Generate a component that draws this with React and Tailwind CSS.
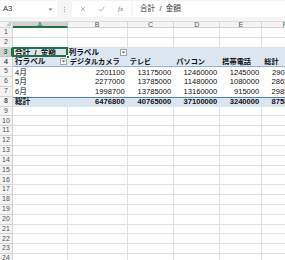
import { useState } from "react";

const colW = ["w-[54.7px]", "w-[60px]", "w-[46.6px]", "w-[46px]", "w-[42px]", "w-[46px]"];
const letters = ["A", "B", "C", "D", "E", "F"];

const body = [
  ["4月", "2201100", "13175000", "12460000", "1245000", "29081100"],
  ["5月", "2277000", "13785000", "11480000", "1080000", "28622000"],
  ["6月", "1998700", "13785000", "13160000", "915000", "29858700"],
];
const total = ["総計", "6476800", "40765000", "37100000", "3240000", "87581800"];
const heads = ["行ラベル", "デジタルカメラ", "テレビ", "パソコン", "携帯電話", "総計"];

function DropBtn() {
  return (
    <span className="flex h-[7px] w-[7px] items-center justify-center border border-[#a6a6a6] bg-white">
      <svg width="5" height="3" viewBox="0 0 5 3">
        <path d="M0.5 0.5h4L2.5 2.6z" fill="#666" />
      </svg>
    </span>
  );
}

function RowHead({ n, selected }) {
  return (
    <div
      className={`flex w-[13px] shrink-0 items-center justify-center border-b border-r text-[7px] ${
        selected
          ? "border-b-[#c6c6c6] border-r-[#217346] border-r-2 bg-[#d2d2d2] text-[#217346]"
          : "border-[#d4d4d4] bg-[#f3f3f3] text-[#555]"
      }`}
    >
      {n}
    </div>
  );
}

function PlainRow({ n }) {
  return (
    <div className="flex h-[9.83px]">
      <RowHead n={n} />
      {colW.map((w, i) => (
        <div key={i} className={`${w} shrink-0 border-b border-r border-[#e1e1e1]`} />
      ))}
    </div>
  );
}

export default function App() {
  const [sel] = useState("A3");
  const rows = [];
  for (let n = 9; n <= 24; n++) rows.push(<PlainRow key={n} n={n} />);

  return (
    <div
      className="h-[260px] w-[285px] overflow-hidden bg-white text-[7.6px] text-[#111]"
      style={{ fontFamily: '"Liberation Sans", "Noto Sans CJK JP", sans-serif' }}
    >
      {/* formula bar */}
      <div className="flex h-[17px] items-stretch bg-[#f5f5f5] pt-[1px]">
        <div className="flex w-[57px] items-center justify-between bg-white pl-[3px] pr-[4px] text-[#333]">
          <span>{sel}</span>
          <svg width="5" height="3" viewBox="0 0 5 3">
            <path d="M0.5 0.5h4L2.5 2.6z" fill="#777" />
          </svg>
        </div>
        <div className="flex w-[15px] items-center justify-center">
          <span className="flex flex-col gap-[1px]">
            <span className="h-[1px] w-[1px] bg-[#aaa]" />
            <span className="h-[1px] w-[1px] bg-[#aaa]" />
            <span className="h-[1px] w-[1px] bg-[#aaa]" />
          </span>
        </div>
        <div className="flex w-[59px] items-center bg-white pl-[8px] text-[#9a9a9a]">
          <svg width="6" height="6" viewBox="0 0 6 6" className="mr-[12px]">
            <path d="M1 1l4 4M5 1L1 5" stroke="#a5a5a5" strokeWidth="0.8" />
          </svg>
          <svg width="7" height="6" viewBox="0 0 7 6" className="mr-[13px]">
            <path d="M0.8 3.2l1.8 1.9L6.3 0.8" stroke="#a5a5a5" strokeWidth="0.8" fill="none" />
          </svg>
          <span className="italic text-[7px] text-[#777]" style={{ fontFamily: '"Liberation Serif", serif' }}>
            fx
          </span>
        </div>
        <div className="ml-[2px] flex flex-1 items-center whitespace-pre bg-white pl-[7px] text-[#333]">
          {"合計  /  金額"}
        </div>
      </div>
      <div className="h-[4px] bg-[#f5f5f5]" />

      {/* column headers */}
      <div className="flex h-[7px] border-t border-[#dcdcdc] bg-[#f3f3f3] text-[7px] leading-none text-[#555]">
        <div className="relative w-[13px] shrink-0 border-r border-b border-[#d4d4d4]">
          <svg width="5" height="5" viewBox="0 0 5 5" className="absolute bottom-[1px] right-[1px]">
            <path d="M5 0V5H0z" fill="#c8c8c8" />
          </svg>
        </div>
        {colW.map((w, i) => (
          <div
            key={i}
            className={`${w} flex shrink-0 items-center justify-center border-r ${
              i === 0
                ? "border-b-2 border-b-[#217346] border-r-[#c6c6c6] bg-[#d2d2d2] text-[#217346]"
                : "border-b border-[#d4d4d4]"
            }`}
          >
            {letters[i]}
          </div>
        ))}
      </div>

      {[1, 2].map((n) => (
        <PlainRow key={n} n={n} />
      ))}

      {/* row 3 */}
      <div className="flex h-[9.83px] font-bold">
        <RowHead n={3} selected />
        <div className={`${colW[0]} relative flex shrink-0 items-center whitespace-pre bg-[#dce6f1] pl-[2px]`}>
          {"合計  /  金額"}
          <div className="absolute inset-0 -left-[1px] -top-[1px] border-2 border-[#217346]" />
          <div className="absolute -bottom-[2px] -right-[2px] h-[4px] w-[4px] border border-white bg-[#217346]" />
        </div>
        <div className={`${colW[1]} flex shrink-0 items-center justify-between bg-[#dce6f1] pl-[1px] pr-[1px]`}>
          <span>列ラベル</span>
          <DropBtn />
        </div>
        {colW.slice(2).map((w, i) => (
          <div key={i} className={`${w} shrink-0 bg-[#dce6f1]`} />
        ))}
      </div>

      {/* row 4 */}
      <div className="flex h-[9.83px] font-bold">
        <RowHead n={4} />
        {heads.map((t, i) => (
          <div
            key={i}
            className={`${colW[i]} flex shrink-0 items-center whitespace-nowrap border-b border-[#95b3d7] bg-[#dce6f1] pl-[2px] ${
              i === 0 ? "justify-between pr-[1px]" : ""
            }`}
          >
            <span className={i === 0 ? "" : "text-[7.2px]"}>{t}</span>
            {i === 0 && <DropBtn />}
          </div>
        ))}
      </div>

      {body.map((r, ri) => (
        <div key={ri} className="flex h-[9.83px]">
          <RowHead n={5 + ri} />
          {r.map((v, i) => (
            <div
              key={i}
              className={`${colW[i]} flex shrink-0 items-center whitespace-nowrap ${
                i === 0 ? "pl-[2px]" : "justify-end pr-[3px]"
              }`}
            >
              {v}
            </div>
          ))}
        </div>
      ))}

      {/* row 8 */}
      <div className="flex h-[9.83px] font-bold">
        <RowHead n={8} />
        {total.map((v, i) => (
          <div
            key={i}
            className={`${colW[i]} flex shrink-0 items-center whitespace-nowrap border-t border-b border-t-[#4f81bd] border-b-[#dce6f1] bg-[#dce6f1] ${
              i === 0 ? "pl-[2px]" : "justify-end pr-[3px]"
            }`}
          >
            {v}
          </div>
        ))}
      </div>

      {rows}
    </div>
  );
}
